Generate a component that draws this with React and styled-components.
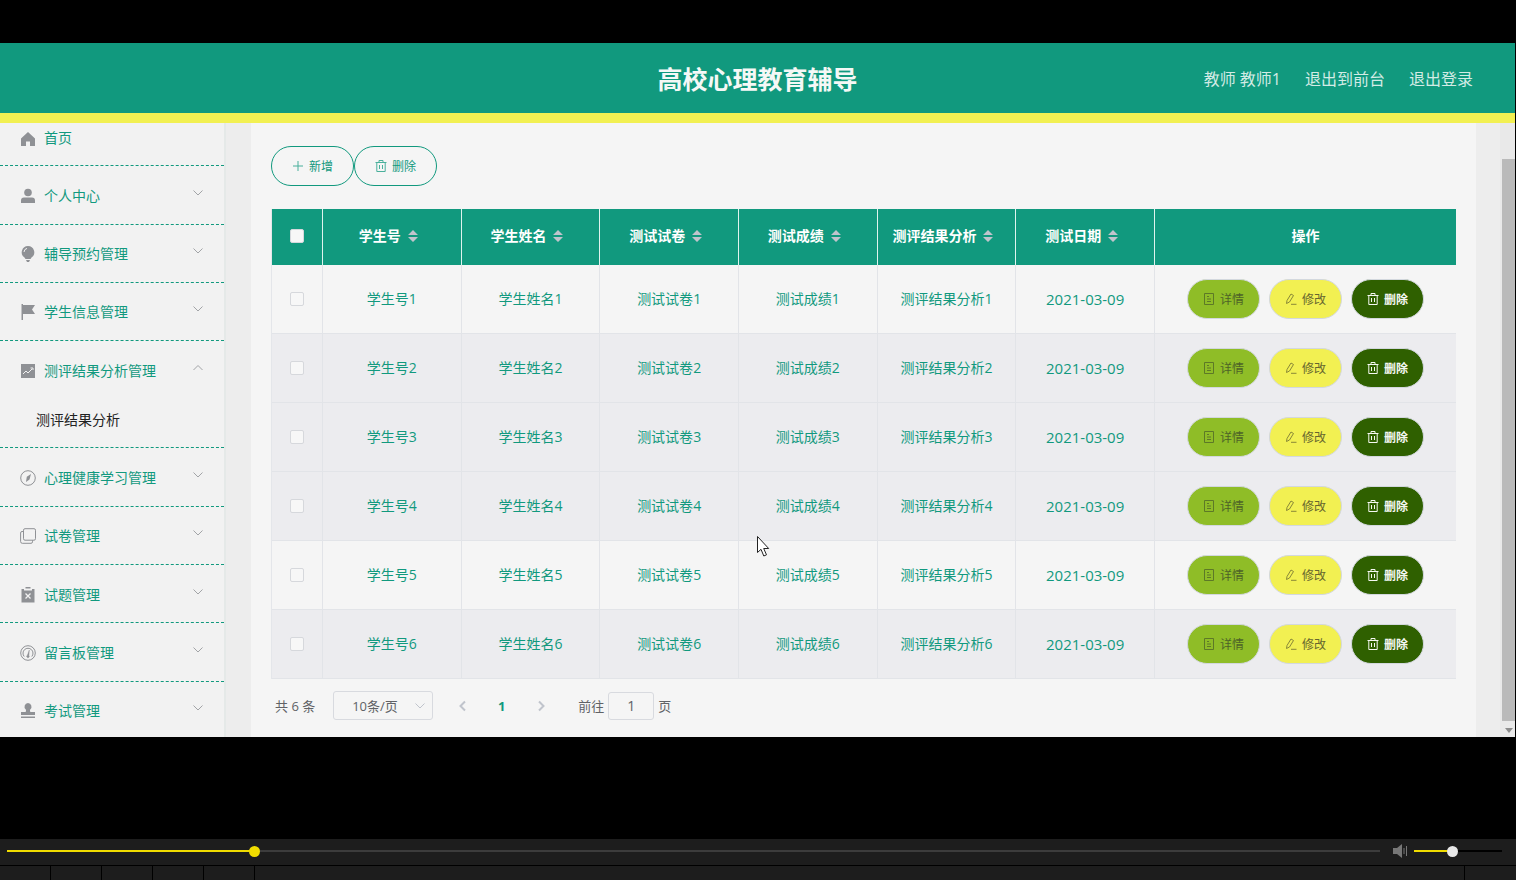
import React, { useState } from 'react';
import styled, { createGlobalStyle } from 'styled-components';

const green = '#11997e';
const yellow = '#f2f052';

const GlobalStyle = createGlobalStyle`
  * {
    box-sizing: border-box;
  }
  body {
    margin: 0;
    background: #000;
    font-family: 'Open Sans', 'Noto Sans CJK SC', sans-serif;
    font-size: 14px;
    line-height: 20px;
  }
  button, input, select {
    font-family: inherit;
    margin: 0;
  }
`;

const Page = styled.div`
  display: flex;
  flex-direction: column;
  height: 100vh;
  overflow: hidden;
`;

const Stage = styled.div`
  position: relative;
  display: flex;
  flex-direction: column;
  flex: 1;
  min-height: 0;
  padding: 43px 1px 102px 0;
`;

const Header = styled.header`
  display: grid;
  grid-template-columns: 1fr auto 1fr;
  align-items: center;
  height: 80px;
  flex-shrink: 0;
  padding-top: 1px;
  background: ${green};
  border-bottom: 10px solid ${yellow};
`;

const Title = styled.h1`
  grid-column: 2;
  margin: 0;
  font-size: 25px;
  line-height: 32px;
  font-weight: 700;
  color: #f5f8f6;
`;

const UserLinks = styled.nav`
  display: flex;
  justify-content: flex-end;
  gap: 24px;
  padding-right: 42px;
  font-size: 16px;
  color: #d3ebe5;

  a {
    color: inherit;
    text-decoration: none;
  }
`;

const Body = styled.div`
  display: flex;
  flex: 1;
  min-height: 0;
  overflow: hidden;
  background: #ededed;
`;

const Sidebar = styled.aside`
  width: 226px;
  flex-shrink: 0;
  overflow: hidden;
  background: #f2f2f2;
  border-right: 2px solid #e5e9e8;
`;

const Menu = styled.ul`
  display: flex;
  flex-direction: column;
  height: calc(100% + 18px);
  margin: -15px 0 0;
  padding: 0;
  list-style: none;
`;

const MenuItem = styled.li`
  flex: ${(props) => (props.$open ? '1 0 50px' : '1 0 0')};
  border-bottom: 1px dashed ${green};
`;

const MenuLink = styled.a`
  display: flex;
  align-items: center;
  height: 57px;
  padding: 2px 20px 0;
  color: ${green};
  text-decoration: none;

  > span {
    flex: 1;
    margin-left: 8px;
  }
`;

const MenuIcon = styled.svg`
  width: 16px;
  height: 16px;
  color: #8f9195;
`;

const Arrow = styled.svg`
  width: 12px;
  height: 12px;
  margin-bottom: 6px;
  fill: none;
  stroke: #a2a4a7;
`;

const SubLink = styled.a`
  display: block;
  padding: 12px 0 0 36px;
  color: #222;
  text-decoration: none;
`;

const Main = styled.main`
  flex: 1;
  min-width: 0;
  margin: 0 24px 0 25px;
  padding: 23px 20px 0;
  background: #f5f5f5;
`;

const Scrollbar = styled.div`
  display: flex;
  flex-direction: column;
  width: 15px;
  padding: 36px 0 0 2px;
  background: #e9e9e9;
`;

const ScrollThumb = styled.div`
  flex: 1;
  background: #bababa;
`;

const ScrollArrow = styled.svg`
  width: 13px;
  height: 16px;
  fill: #8c8c8c;
`;

const Toolbar = styled.div`
  display: flex;
  margin-bottom: 23px;
`;

const PillButton = styled.button`
  display: inline-flex;
  align-items: center;
  justify-content: center;
  gap: 5px;
  width: ${(props) => props.$width || 73}px;
  height: 40px;
  padding: 0;
  border: 1px solid ${(props) => props.$border || '#d3d8de'};
  border-radius: 20px;
  background: ${(props) => props.$bg || 'transparent'};
  color: ${(props) => props.$color};
  font-size: 12px;
  font-weight: ${(props) => (props.$bold ? 700 : 400)};

  svg {
    width: 12px;
    height: 12px;
    fill: none;
    stroke: currentColor;
    opacity: ${(props) => (props.$bold ? 1 : 0.75)};
  }
`;

const Table = styled.table`
  width: 100%;
  table-layout: fixed;
  border-collapse: separate;
  border-spacing: 0;
  border-left: 1px solid #e4e6ea;
  text-align: center;
`;

const HeadCell = styled.th`
  width: ${(props) => (props.$width ? `${props.$width}px` : 'auto')};
  height: 56px;
  padding: 0 0 3px;
  background: ${green};
  border-right: 1px solid #dff3ee;
  color: #fff;
  font-weight: 700;

  &:last-child {
    border-right: 0;
  }
`;

const HeadLabel = styled.span`
  display: inline-flex;
  align-items: center;
`;

const SortIcon = styled.svg`
  width: 24px;
  height: 14px;
  fill: #c0c4cc;
`;

const Row = styled.tr`
  background: ${(props) => (props.$shaded ? '#ececef' : '#f5f5f5')};
`;

const Cell = styled.td`
  height: 69px;
  padding: 0;
  border-right: 1px solid #e2e4e8;
  border-bottom: 1px solid #e2e4e8;
  color: ${green};
  font-size: ${(props) => (props.$date ? 15 : 14)}px;

  &:last-child {
    border-right: 0;
  }
`;

const Checkbox = styled.input.attrs({ type: 'checkbox' })`
  appearance: none;
  display: block;
  width: 14px;
  height: 14px;
  margin: 0 auto;
  border: 1px solid #d6d8dc;
  border-radius: 2px;
  background: #f7f7f7;

  &:checked {
    background: ${green};
  }
`;

const Actions = styled.div`
  display: flex;
  justify-content: center;
  gap: 9px;
`;

const Pagination = styled.div`
  display: flex;
  align-items: center;
  padding: 12px 4px 0;
  font-size: 13px;
  color: #606266;
`;

const SelectBox = styled.div`
  position: relative;
  margin: 0 10px 0 18px;

  svg {
    position: absolute;
    right: 7px;
    top: 9px;
    margin: 0;
    stroke: #c0c4cc;
    pointer-events: none;
  }
`;

const PageSize = styled.select`
  appearance: none;
  display: block;
  width: 100px;
  height: 29px;
  padding: 0 18px;
  border: 1px solid #d8dadf;
  border-radius: 3px;
  background: #f5f5f5;
  color: #606266;
  font-size: 13px;
`;

const Pager = styled.div`
  display: flex;
  margin-right: 18px;
`;

const PageButton = styled.button`
  display: flex;
  align-items: center;
  justify-content: center;
  width: 39px;
  height: 28px;
  padding: 0;
  border: 0;
  background: none;
  color: ${(props) => (props.$active ? green : '#c0c4cc')};
  font-size: 13px;
  font-weight: 700;

  svg {
    width: 12px;
    height: 12px;
    fill: none;
    stroke: currentColor;
    stroke-width: 2;
  }
`;

const Jumper = styled.label`
  display: flex;
  align-items: center;
  gap: 4px;
`;

const JumpInput = styled.input`
  width: 46px;
  height: 28px;
  padding: 0;
  border: 1px solid #d8dadf;
  border-radius: 3px;
  background: #f5f5f5;
  color: #606266;
  font-size: 14px;
  text-align: center;
`;

const Cursor = styled.svg`
  position: absolute;
  left: 756px;
  top: 535px;
  width: 14px;
  height: 23px;
  fill: #fff;
  stroke: #222;
`;

const Player = styled.footer`
  flex-shrink: 0;
  background: #1d1d1d;
`;

const PlayerBar = styled.div`
  display: flex;
  align-items: center;
  height: 27px;
  padding: 0 14px 2px 7px;
  border-bottom: 1px solid #000;
`;

const Range = styled.input.attrs({ type: 'range', min: 0, max: 1000 })`
  appearance: none;
  display: block;
  width: ${(props) => props.$width || 'auto'};
  flex: ${(props) => (props.$width ? '0 0 auto' : '1')};
  min-width: 0;
  height: 11px;
  background: linear-gradient(#f0dc00, #f0dc00) 0 center / calc(var(--value) * 100%) 2px no-repeat,
    linear-gradient(${(props) => props.$track}, ${(props) => props.$track}) 0 center / 100% 2px no-repeat;

  &::-webkit-slider-thumb {
    appearance: none;
    width: 11px;
    height: 11px;
    border-radius: 50%;
    background: ${(props) => props.$thumb};
  }
`;

const Speaker = styled.svg`
  width: 15px;
  height: 14px;
  margin: 0 6px 0 13px;
  fill: #777;
`;

const PlayerSlots = styled.div`
  display: flex;
  height: 14px;
`;

const Slot = styled.div`
  width: ${(props) => (props.$wide ? 'auto' : '51px')};
  flex: ${(props) => (props.$wide ? '1' : 'none')};
  border-right: 1px solid #000;

  &:last-child {
    border-right: 0;
  }
`;

const icons = {
  home: <path fill="currentColor" d="M8 2 15 8.500V16h-5v-4.500H6V16H1V8.500z" />,
  user: (
    <g fill="currentColor">
      <circle cx="8" cy="4.500" r="3.800" />
      <path d="M1 15v-2.500Q1 9.500 4 9.500h8q3 0 3 3V15z" />
    </g>
  ),
  bulb: (
    <g>
      <path fill="currentColor" d="M8 0a6.300 6.300 0 0 1 3.500 11.500L10.500 13h-5l-1-1.500A6.300 6.300 0 0 1 8 0zM6 14h4l-1 2H7z" />
      <path fill="none" stroke="#f2f2f2" d="M4 6q.2-3 3-3.600" />
    </g>
  ),
  flag: <path fill="currentColor" d="M1.500 0H3v1h12l-3 4.500 3 4.500H3v6H1.500z" />,
  chart: (
    <g>
      <path fill="currentColor" d="M1 1h14v14H1z" />
      <path fill="none" stroke="#f2f2f2" d="m3 11 3-3 2 2 4-4M10.500 5H13v2" />
    </g>
  ),
  compass: (
    <g>
      <circle cx="8" cy="8" r="7.300" fill="none" stroke="currentColor" />
      <path fill="currentColor" d="M11 4 9.500 9.500 6 12l.8-5.200z" />
    </g>
  ),
  copy: (
    <g fill="none" stroke="currentColor">
      <rect x="3.500" y=".7" width="12" height="11.500" rx="1.500" />
      <path d="M3.500 3.500H2Q.6 3.500.6 5v8.500Q.6 15.300 2.300 15.300H11q1.500 0 1.500-1.500v-1.500" />
    </g>
  ),
  clipboard: (
    <g>
      <path fill="currentColor" d="M5.500 0h5v1.500h-5zM1.500 2H4v1.500h8V2h2.500v13.500h-13z" />
      <path fill="none" stroke="#f2f2f2" strokeWidth="1.300" d="m5.500 6.500 5 5m0-5-5 5" />
    </g>
  ),
  gauge: (
    <g fill="none" stroke="currentColor">
      <circle cx="8" cy="8" r="7.300" />
      <path d="M4.200 11.500a5 5 0 1 1 7.600 0" />
      <path fill="currentColor" strokeWidth=".4" d="m9.300 5-.4 5.500a1.300 1.300 0 1 1-1.500-.3z" />
    </g>
  ),
  stamp: (
    <path fill="currentColor" d="M8 0a3.700 3.700 0 0 1 2.200 6.500Q9.500 8 10.500 9H15v3H1V9h4.500q1-1 .3-2.500A3.700 3.700 0 0 1 8 0zM1 13.500h14V15H1z" />
  ),
};

const menu = [
  { label: '首页', icon: 'home', plain: true },
  { label: '个人中心', icon: 'user' },
  { label: '辅导预约管理', icon: 'bulb' },
  { label: '学生信息管理', icon: 'flag' },
  { label: '测评结果分析管理', icon: 'chart', child: '测评结果分析' },
  { label: '心理健康学习管理', icon: 'compass' },
  { label: '试卷管理', icon: 'copy' },
  { label: '试题管理', icon: 'clipboard' },
  { label: '留言板管理', icon: 'gauge' },
  { label: '考试管理', icon: 'stamp' },
];

const columns = ['学生号', '学生姓名', '测试试卷', '测试成绩', '测评结果分析', '测试日期'];
const rows = [1, 2, 3, 4, 5, 6];
const shadedRows = [2, 3, 4, 6];

const Chevron = ({ up }) => (
  <Arrow viewBox="0 0 12 12" aria-hidden="true">
    <path d={up ? 'M1.500 8 6 3.500 10.500 8' : 'M1.500 3.500 6 8l4.500-4.500'} />
  </Arrow>
);

const TrashIcon = () => (
  <svg viewBox="0 0 12 12" aria-hidden="true">
    <path d="M.5 2.500h11M4 2.500v-2h4v2M1.800 2.500v9h8.400v-9M4.500 5v4M7.500 5v4" />
  </svg>
);

const PlusIcon = () => (
  <svg viewBox="0 0 12 12" aria-hidden="true">
    <path d="M6 1v10M1 6h10" />
  </svg>
);

const DocIcon = () => (
  <svg viewBox="0 0 12 12" aria-hidden="true">
    <path d="M1.500.5h9v11h-9zM4 3.500h2M4 6h4M4 8.500h4" />
  </svg>
);

const EditIcon = () => (
  <svg viewBox="0 0 12 12" aria-hidden="true">
    <path d="M1.500 10.500 2 7.500l4-6.500 2.500 1.500-4 6.500zM6 11.300h5.500" />
  </svg>
);

const Slider = ({ initial, ...rest }) => {
  const [value, setValue] = useState(initial);
  return (
    <Range
      value={value}
      onChange={(e) => setValue(Number(e.target.value))}
      style={{ '--value': value / 1000 }}
      {...rest}
    />
  );
};

const SideMenu = () => (
  <Sidebar>
    <Menu>
      {menu.map((item) => (
        <MenuItem key={item.label} $open={!!item.child}>
          <MenuLink href="#">
            <MenuIcon viewBox="0 0 16 16" aria-hidden="true">
              {icons[item.icon]}
            </MenuIcon>
            <span>{item.label}</span>
            {!item.plain && <Chevron up={!!item.child} />}
          </MenuLink>
          {item.child && <SubLink href="#">{item.child}</SubLink>}
        </MenuItem>
      ))}
    </Menu>
  </Sidebar>
);

const ResultTable = () => (
  <Table>
    <thead>
      <tr>
        <HeadCell $width={51}>
          <Checkbox aria-label="全选" />
        </HeadCell>
        {columns.map((name) => (
          <HeadCell key={name}>
            <HeadLabel>
              {name}
              <SortIcon viewBox="0 0 24 14" aria-hidden="true">
                <path d="M12 1l5 5H7zM12 13l5-5H7z" />
              </SortIcon>
            </HeadLabel>
          </HeadCell>
        ))}
        <HeadCell $width={301}>操作</HeadCell>
      </tr>
    </thead>
    <tbody>
      {rows.map((n) => (
        <Row key={n} $shaded={shadedRows.includes(n)}>
          <Cell>
            <Checkbox aria-label={`学生号${n}`} />
          </Cell>
          {columns.slice(0, 5).map((name) => (
            <Cell key={name}>
              {name}
              {n}
            </Cell>
          ))}
          <Cell $date>2021-03-09</Cell>
          <Cell>
            <Actions>
              <PillButton $bg="#8fbd27" $color="#4d6327">
                <DocIcon />
                详情
              </PillButton>
              <PillButton $bg={yellow} $color="#66652f">
                <EditIcon />
                修改
              </PillButton>
              <PillButton $bg="#2f6000" $color="#f5f8f2" $bold>
                <TrashIcon />
                删除
              </PillButton>
            </Actions>
          </Cell>
        </Row>
      ))}
    </tbody>
  </Table>
);

const TablePagination = () => (
  <Pagination>
    <span>共 6 条</span>
    <SelectBox>
      <PageSize aria-label="每页条数">
        <option>10条/页</option>
      </PageSize>
      <Chevron />
    </SelectBox>
    <Pager>
      <PageButton aria-label="上一页">
        <svg viewBox="0 0 12 12">
          <path d="M8 1.500 3.500 6 8 10.500" />
        </svg>
      </PageButton>
      <PageButton $active>1</PageButton>
      <PageButton aria-label="下一页">
        <svg viewBox="0 0 12 12">
          <path d="M4 1.500 8.500 6 4 10.500" />
        </svg>
      </PageButton>
    </Pager>
    <Jumper>
      前往
      <JumpInput defaultValue="1" />
      页
    </Jumper>
  </Pagination>
);

const App = () => (
  <Page>
    <GlobalStyle />
    <Stage>
      <Header>
        <Title>高校心理教育辅导</Title>
        <UserLinks>
          <span>教师 教师1</span>
          <a href="#">退出到前台</a>
          <a href="#">退出登录</a>
        </UserLinks>
      </Header>
      <Body>
        <SideMenu />
        <Main>
          <Toolbar>
            <PillButton $width={83} $border={green} $color={green}>
              <PlusIcon />
              新增
            </PillButton>
            <PillButton $width={83} $border={green} $color={green}>
              <TrashIcon />
              删除
            </PillButton>
          </Toolbar>
          <ResultTable />
          <TablePagination />
        </Main>
        <Scrollbar>
          <ScrollThumb />
          <ScrollArrow viewBox="0 0 13 16">
            <path d="M3 7h8l-4 5z" />
          </ScrollArrow>
        </Scrollbar>
      </Body>
      <Cursor viewBox="0 0 14 23" aria-hidden="true">
        <path d="M1.500 1.500v16l3.500-3.200 2.800 6.700 2.700-1.200-2.800-6.300h5z" />
      </Cursor>
    </Stage>
    <Player>
      <PlayerBar>
        <Slider initial={178} aria-label="播放进度" $track="#3c3c3c" $thumb="#f0dc00" />
        <Speaker viewBox="0 0 15 14" aria-hidden="true">
          <path d="M0 4h4l5-4v14l-5-4H0zM10.500 4h1v6h-1zM13 2h1v10h-1z" />
        </Speaker>
        <Slider initial={435} aria-label="音量" $width="88px" $track="#000" $thumb="#e8e8e8" />
      </PlayerBar>
      <PlayerSlots>
        <Slot />
        <Slot />
        <Slot />
        <Slot />
        <Slot />
        <Slot $wide />
        <Slot />
      </PlayerSlots>
    </Player>
  </Page>
);

export default App;
